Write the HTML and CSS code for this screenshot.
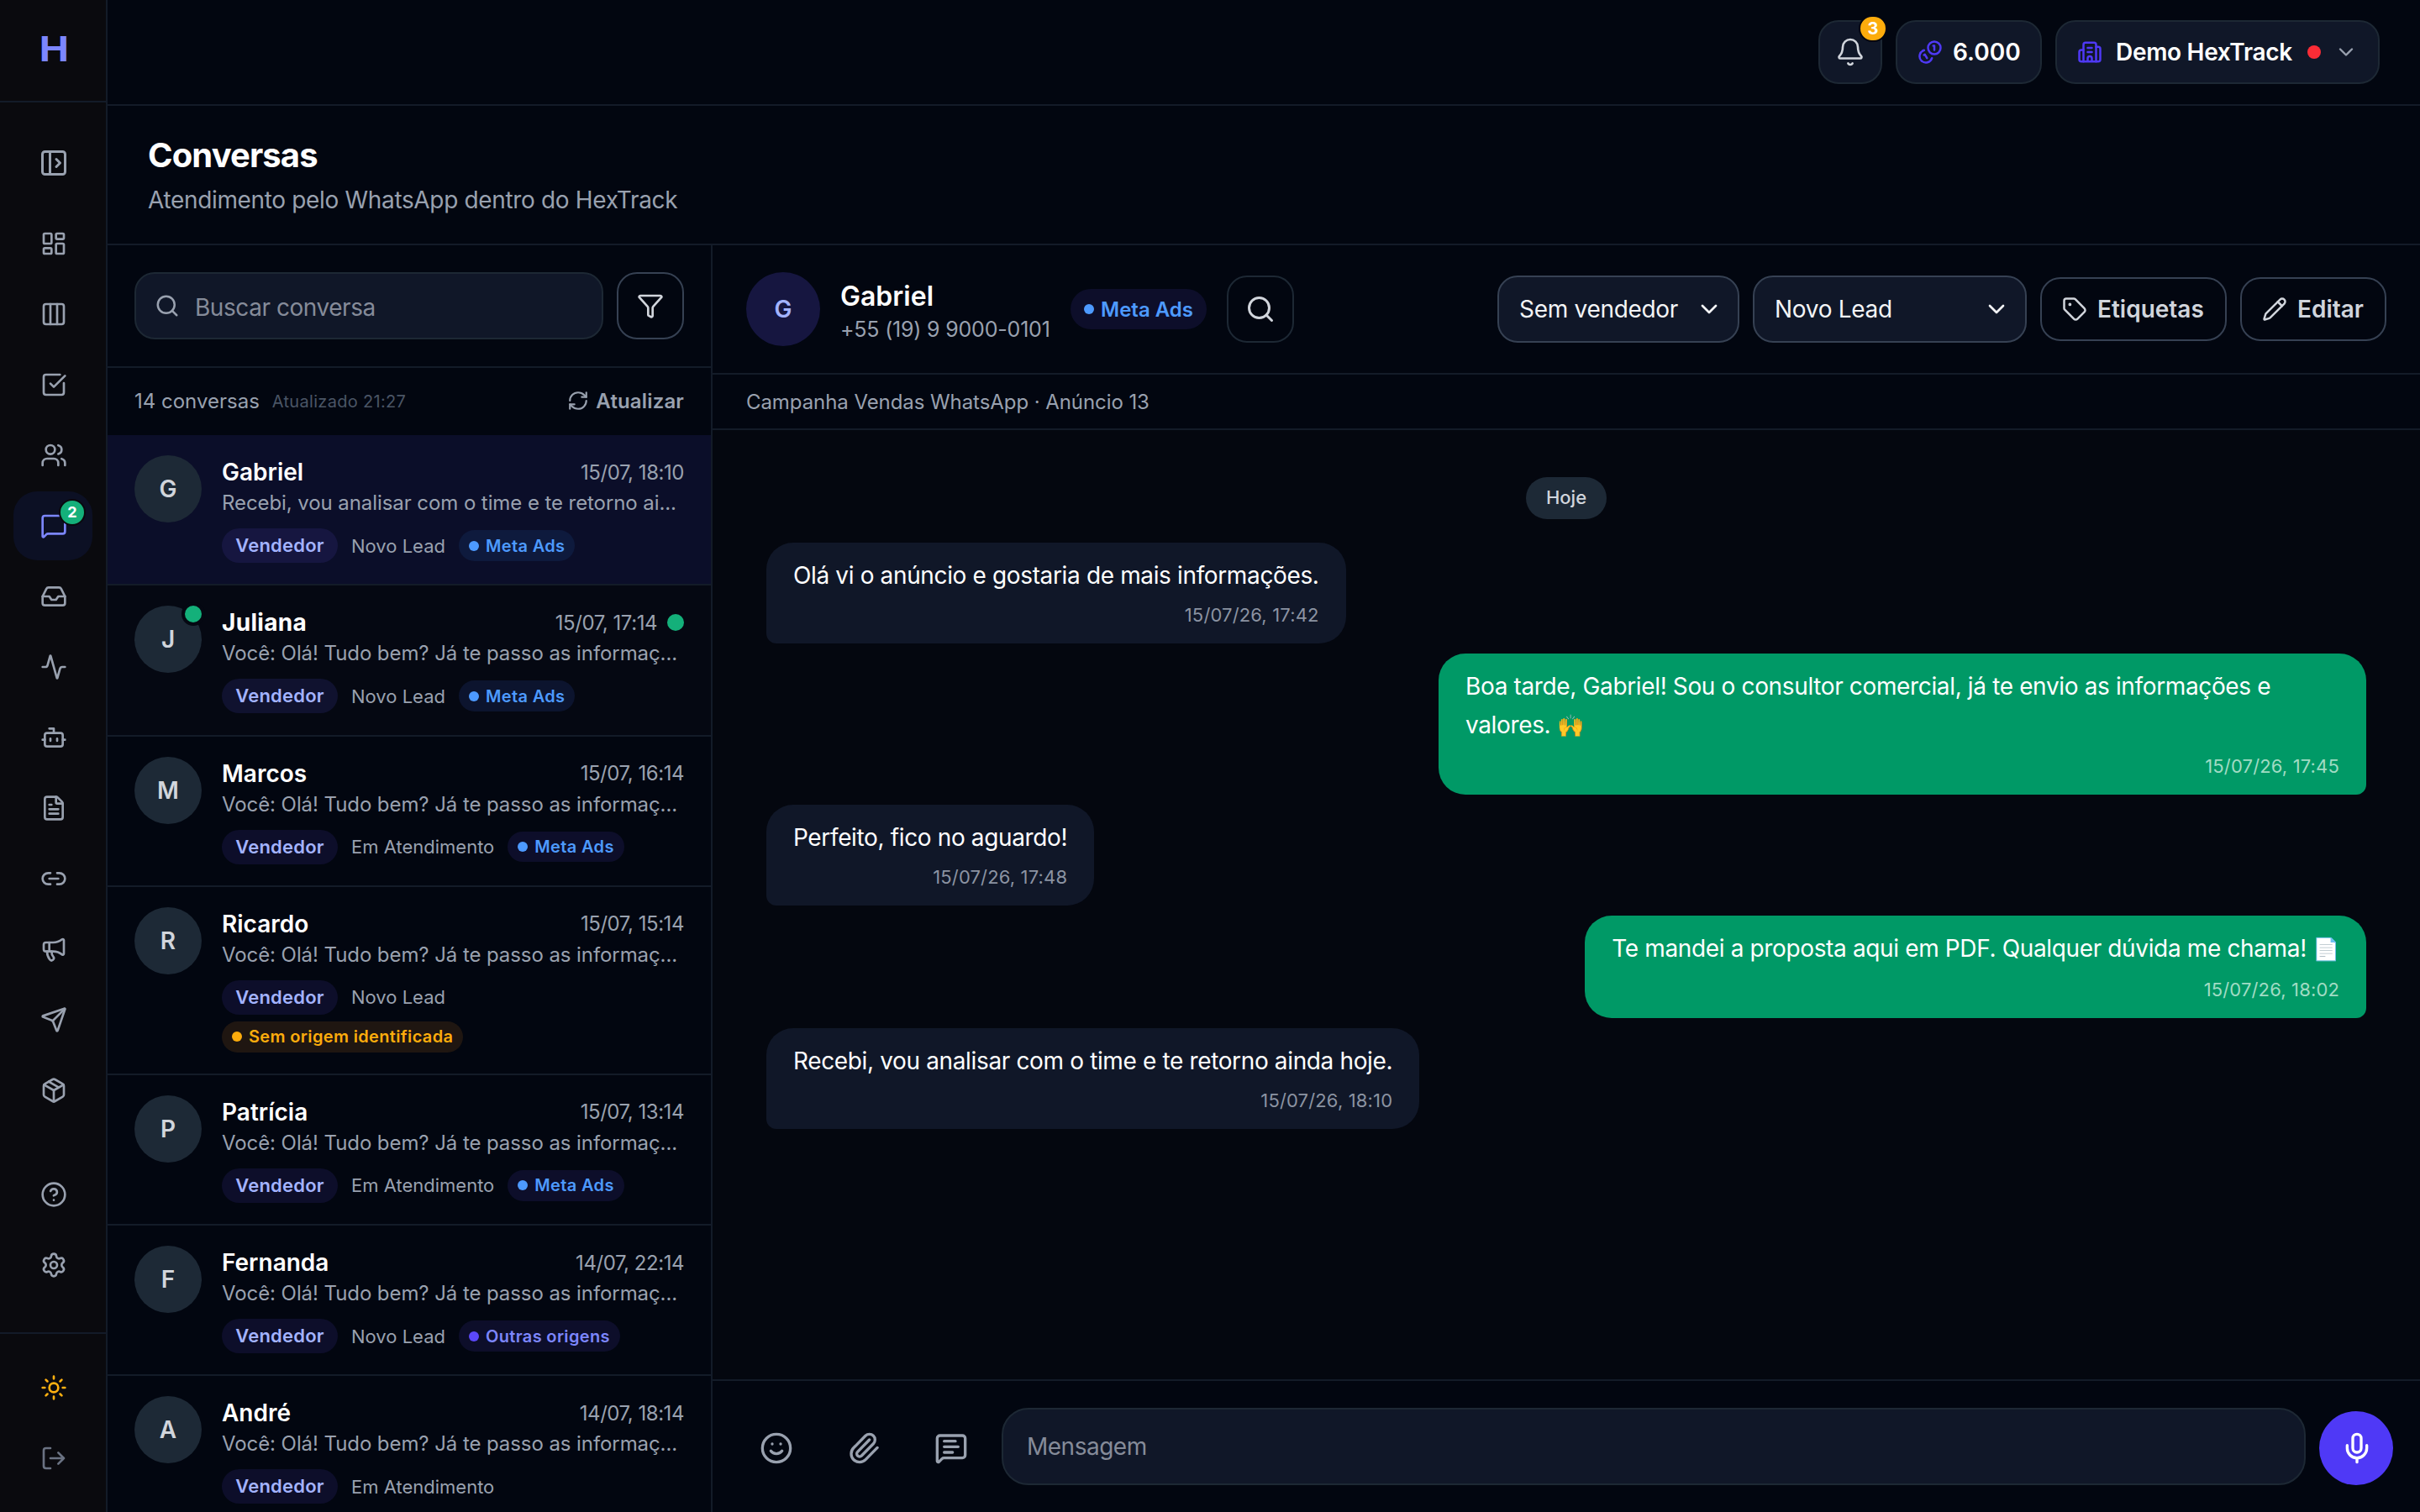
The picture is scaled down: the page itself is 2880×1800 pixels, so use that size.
FILE: index.html
```html
<!DOCTYPE html>
<html lang="pt-BR">
<head>
  <meta charset="UTF-8" />
  <meta name="viewport" content="width=device-width, initial-scale=1.0" />
  <title>HexTrack | Conversas</title>
  <link rel="stylesheet" href="styles.css">
</head>
<body>
  <svg class="sprite" xmlns="http://www.w3.org/2000/svg">
    <symbol id="i-panel" viewBox="0 0 24 24"><rect x="3" y="3" width="18" height="18" rx="2"/><path d="M9 3v18M14 9l3 3-3 3"/></symbol>
    <symbol id="i-dashboard" viewBox="0 0 24 24"><rect x="3" y="3" width="7" height="9" rx="1"/><rect x="14" y="3" width="7" height="5" rx="1"/><rect x="14" y="12" width="7" height="9" rx="1"/><rect x="3" y="16" width="7" height="5" rx="1"/></symbol>
    <symbol id="i-columns" viewBox="0 0 24 24"><rect x="3" y="3" width="18" height="18" rx="2"/><path d="M9 3v18M15 3v18"/></symbol>
    <symbol id="i-check" viewBox="0 0 24 24"><path d="M21 10.5V19a2 2 0 0 1-2 2H5a2 2 0 0 1-2-2V5a2 2 0 0 1 2-2h12.5"/><path d="m9 11 3 3L22 4"/></symbol>
    <symbol id="i-users" viewBox="0 0 24 24"><path d="M16 21v-2a4 4 0 0 0-4-4H6a4 4 0 0 0-4 4v2"/><circle cx="9" cy="7" r="4"/><path d="M22 21v-2a4 4 0 0 0-3-3.87M16 3.13a4 4 0 0 1 0 7.75"/></symbol>
    <symbol id="i-chat" viewBox="0 0 24 24"><path d="M22 17a2 2 0 0 1-2 2H6.828a2 2 0 0 0-1.414.586l-2.202 2.202A.71.71 0 0 1 2 21.286V5a2 2 0 0 1 2-2h16a2 2 0 0 1 2 2z"/></symbol>
    <symbol id="i-inbox" viewBox="0 0 24 24"><path d="M22 12h-6l-2 3h-4l-2-3H2"/><path d="M5.45 5.11 2 12v6a2 2 0 0 0 2 2h16a2 2 0 0 0 2-2v-6l-3.45-6.89A2 2 0 0 0 16.76 4H7.24a2 2 0 0 0-1.79 1.11z"/></symbol>
    <symbol id="i-activity" viewBox="0 0 24 24"><path d="M22 12h-2.48a2 2 0 0 0-1.93 1.46l-2.35 8.36a.25.25 0 0 1-.48 0L9.24 2.18a.25.25 0 0 0-.48 0l-2.35 8.36A2 2 0 0 1 4.49 12H2"/></symbol>
    <symbol id="i-bot" viewBox="0 0 24 24"><path d="M12 8V4H8"/><rect x="4" y="8" width="16" height="12" rx="2"/><path d="M2 14h2M20 14h2M15 13v2M9 13v2"/></symbol>
    <symbol id="i-file" viewBox="0 0 24 24"><path d="M6 22a2 2 0 0 1-2-2V4a2 2 0 0 1 2-2h8a2.4 2.4 0 0 1 1.704.706l3.588 3.588A2.4 2.4 0 0 1 20 8v12a2 2 0 0 1-2 2z"/><path d="M14 2v5a1 1 0 0 0 1 1h5M10 9H8M16 13H8M16 17H8"/></symbol>
    <symbol id="i-link" viewBox="0 0 24 24"><path d="M9 17H7A5 5 0 0 1 7 7h2M15 7h2a5 5 0 1 1 0 10h-2M8 12h8"/></symbol>
    <symbol id="i-megaphone" viewBox="0 0 24 24"><path d="M11 6a13 13 0 0 0 8.4-2.8A1 1 0 0 1 21 4v12a1 1 0 0 1-1.6.8A13 13 0 0 0 11 14H5a2 2 0 0 1-2-2V8a2 2 0 0 1 2-2z"/><path d="M6 14a12 12 0 0 0 2.4 7.2 2 2 0 0 0 3.2-2.4A8 8 0 0 1 10 14M8 6v8"/></symbol>
    <symbol id="i-send" viewBox="0 0 24 24"><path d="M14.536 21.686a.5.5 0 0 0 .937-.024l6.5-19a.496.496 0 0 0-.635-.635l-19 6.5a.5.5 0 0 0-.024.937l7.93 3.18a2 2 0 0 1 1.112 1.11z"/><path d="m21.854 2.147-10.94 10.939"/></symbol>
    <symbol id="i-package" viewBox="0 0 24 24"><path d="M11 21.73a2 2 0 0 0 2 0l7-4A2 2 0 0 0 21 16V8a2 2 0 0 0-1-1.73l-7-4a2 2 0 0 0-2 0l-7 4A2 2 0 0 0 3 8v8a2 2 0 0 0 1 1.73z"/><path d="M12 22V12"/><path d="M3.29 7 12 12l8.71-5M7.5 4.27l9 5.15"/></symbol>
    <symbol id="i-help" viewBox="0 0 24 24"><circle cx="12" cy="12" r="10"/><path d="M9.09 9a3 3 0 0 1 5.83 1c0 2-3 3-3 3M12 17h.01"/></symbol>
    <symbol id="i-settings" viewBox="0 0 24 24"><path d="M9.671 4.136a2.34 2.34 0 0 1 4.659 0 2.34 2.34 0 0 0 3.319 1.915 2.34 2.34 0 0 1 2.33 4.033 2.34 2.34 0 0 0 0 3.831 2.34 2.34 0 0 1-2.33 4.033 2.34 2.34 0 0 0-3.319 1.915 2.34 2.34 0 0 1-4.659 0 2.34 2.34 0 0 0-3.32-1.915 2.34 2.34 0 0 1-2.33-4.033 2.34 2.34 0 0 0 0-3.831A2.34 2.34 0 0 1 6.35 6.051a2.34 2.34 0 0 0 3.319-1.915"/><circle cx="12" cy="12" r="3"/></symbol>
    <symbol id="i-sun" viewBox="0 0 24 24"><circle cx="12" cy="12" r="4"/><path d="M12 2v2M12 20v2M4.930 4.930l1.410 1.410M17.660 17.660l1.410 1.410M2 12h2M20 12h2M6.340 17.660l-1.410 1.410M19.070 4.930l-1.410 1.410"/></symbol>
    <symbol id="i-logout" viewBox="0 0 24 24"><path d="M16 17l5-5-5-5M21 12H9M9 21H5a2 2 0 0 1-2-2V5a2 2 0 0 1 2-2h4"/></symbol>
    <symbol id="i-bell" viewBox="0 0 24 24"><path d="M10.268 21a2 2 0 0 0 3.464 0"/><path d="M3.262 15.326A1 1 0 0 0 4 17h16a1 1 0 0 0 .74-1.673C19.41 13.956 18 12.499 18 8A6 6 0 0 0 6 8c0 4.499-1.411 5.956-2.738 7.326"/></symbol>
    <symbol id="i-coins" viewBox="0 0 24 24"><path d="M13.744 17.736a6 6 0 1 1-7.48-7.48M15 6h1v4M6.134 14.768l.866-.5 2 3.464"/><circle cx="16" cy="8" r="6"/></symbol>
    <symbol id="i-building" viewBox="0 0 24 24"><path d="M10 12h4M10 8h4M14 21v-3a2 2 0 0 0-4 0v3M6 10H4a2 2 0 0 0-2 2v7a2 2 0 0 0 2 2h16a2 2 0 0 0 2-2V9a2 2 0 0 0-2-2h-2"/><path d="M6 21V5a2 2 0 0 1 2-2h8a2 2 0 0 1 2 2v16"/></symbol>
    <symbol id="i-chevron" viewBox="0 0 24 24"><path d="m6 9 6 6 6-6"/></symbol>
    <symbol id="i-search" viewBox="0 0 24 24"><circle cx="11" cy="11" r="8"/><path d="m21 21-4.34-4.34"/></symbol>
    <symbol id="i-funnel" viewBox="0 0 24 24"><path d="M10 20a1 1 0 0 0 .553.895l2 1A1 1 0 0 0 14 21v-7a2 2 0 0 1 .517-1.341L21.74 4.67A1 1 0 0 0 21 3H3a1 1 0 0 0-.742 1.67l7.225 7.989A2 2 0 0 1 10 14z"/></symbol>
    <symbol id="i-refresh" viewBox="0 0 24 24"><path d="M3 12a9 9 0 0 1 9-9 9.75 9.75 0 0 1 6.74 2.74L21 8"/><path d="M21 3v5h-5M21 12a9 9 0 0 1-9 9 9.75 9.75 0 0 1-6.740-2.740L3 16"/><path d="M8 16H3v5"/></symbol>
    <symbol id="i-tag" viewBox="0 0 24 24"><path d="M12.586 2.586A2 2 0 0 0 11.172 2H4a2 2 0 0 0-2 2v7.172a2 2 0 0 0 .586 1.414l8.704 8.704a2.426 2.426 0 0 0 3.42 0l6.58-6.58a2.426 2.426 0 0 0 0-3.42z"/><circle cx="7.5" cy="7.5" r=".5" fill="currentColor"/></symbol>
    <symbol id="i-pencil" viewBox="0 0 24 24"><path d="M21.174 6.812a1 1 0 0 0-3.986-3.987L3.842 16.174a2 2 0 0 0-.5.83l-1.321 4.352a.5.5 0 0 0 .623.622l4.353-1.32a2 2 0 0 0 .83-.497z"/><path d="m15 5 4 4"/></symbol>
    <symbol id="i-smile" viewBox="0 0 24 24"><circle cx="12" cy="12" r="10"/><path d="M8 14s1.500 2 4 2 4-2 4-2M9 9h.01M15 9h.01"/></symbol>
    <symbol id="i-clip" viewBox="0 0 24 24"><path d="m16 6-8.414 8.586a2 2 0 0 0 2.829 2.829l8.414-8.586a4 4 0 1 0-5.657-5.657l-8.379 8.551a6 6 0 1 0 8.485 8.485l8.379-8.551"/></symbol>
    <symbol id="i-note" viewBox="0 0 24 24"><path d="M22 17a2 2 0 0 1-2 2H6.828a2 2 0 0 0-1.414.586l-2.202 2.202A.71.71 0 0 1 2 21.286V5a2 2 0 0 1 2-2h16a2 2 0 0 1 2 2z"/><path d="M7 11h10M7 15h6M7 7h8"/></symbol>
    <symbol id="i-mic" viewBox="0 0 24 24"><path d="M12 19v3M19 10v2a7 7 0 0 1-14 0v-2"/><rect x="9" y="2" width="6" height="13" rx="3"/></symbol>
  </svg>

  <aside class="sidebar">
    <div class="logo"><span>H</span></div>
    <nav class="side-nav">
      <a class="side-toggle"><svg class="icon"><use href="#i-panel"/></svg></a>
      <a class="side-link"><svg class="icon"><use href="#i-dashboard"/></svg></a>
      <a class="side-link"><svg class="icon"><use href="#i-columns"/></svg></a>
      <a class="side-link"><svg class="icon"><use href="#i-check"/></svg></a>
      <a class="side-link"><svg class="icon"><use href="#i-users"/></svg></a>
      <a class="side-link active"><svg class="icon"><use href="#i-chat"/></svg><span class="side-badge">2</span></a>
      <a class="side-link"><svg class="icon"><use href="#i-inbox"/></svg></a>
      <a class="side-link"><svg class="icon"><use href="#i-activity"/></svg></a>
      <a class="side-link"><svg class="icon"><use href="#i-bot"/></svg></a>
      <a class="side-link"><svg class="icon"><use href="#i-file"/></svg></a>
      <a class="side-link"><svg class="icon"><use href="#i-link"/></svg></a>
      <a class="side-link"><svg class="icon"><use href="#i-megaphone"/></svg></a>
      <a class="side-link"><svg class="icon"><use href="#i-send"/></svg></a>
      <a class="side-link"><svg class="icon"><use href="#i-package"/></svg></a>
      <a class="side-link side-help"><svg class="icon"><use href="#i-help"/></svg></a>
      <a class="side-link"><svg class="icon"><use href="#i-settings"/></svg></a>
    </nav>
    <div class="side-footer">
      <a class="side-link sun"><svg class="icon"><use href="#i-sun"/></svg></a>
      <a class="side-link logout"><svg class="icon"><use href="#i-logout"/></svg></a>
    </div>
  </aside>

  <div class="page">
    <header class="topbar">
      <button class="top-btn bell"><svg class="icon"><use href="#i-bell"/></svg><span class="bell-badge">3</span></button>
      <button class="top-btn credits"><svg class="icon"><use href="#i-coins"/></svg><span>6.000</span></button>
      <button class="top-btn company"><svg class="icon"><use href="#i-building"/></svg><span class="company-name">Demo HexTrack</span><span class="status-dot"></span><svg class="icon chevron"><use href="#i-chevron"/></svg></button>
    </header>

    <div class="page-title">
      <h1>Conversas</h1>
      <p>Atendimento pelo WhatsApp dentro do HexTrack</p>
    </div>

    <main class="inbox">
      <section class="list-panel">
        <div class="list-search">
          <div class="search-box"><svg class="icon"><use href="#i-search"/></svg><span>Buscar conversa</span></div>
          <button class="filter-btn"><svg class="icon"><use href="#i-funnel"/></svg></button>
        </div>
        <div class="list-info">
          <span class="count">14 conversas</span>
          <span class="updated">Atualizado 21:27</span>
          <button class="refresh"><svg class="icon"><use href="#i-refresh"/></svg><span>Atualizar</span></button>
        </div>

        <div class="conversations">
          <article class="conv selected">
            <div class="avatar">G</div>
            <div class="conv-body">
              <div class="conv-top"><span class="name">Gabriel</span><span class="time">15/07, 18:10</span></div>
              <p class="preview">Recebi, vou analisar com o time e te retorno ai...</p>
              <div class="tags"><span class="seller">Vendedor</span><span class="stage">Novo Lead</span><span class="origin meta">Meta Ads</span></div>
            </div>
          </article>
          <article class="conv unread">
            <div class="avatar">J<span class="avatar-dot"></span></div>
            <div class="conv-body">
              <div class="conv-top"><span class="name">Juliana</span><span class="time">15/07, 17:14</span><span class="unread-dot"></span></div>
              <p class="preview">Você: Olá! Tudo bem? Já te passo as informaç...</p>
              <div class="tags"><span class="seller">Vendedor</span><span class="stage">Novo Lead</span><span class="origin meta">Meta Ads</span></div>
            </div>
          </article>
          <article class="conv">
            <div class="avatar">M</div>
            <div class="conv-body">
              <div class="conv-top"><span class="name">Marcos</span><span class="time">15/07, 16:14</span></div>
              <p class="preview">Você: Olá! Tudo bem? Já te passo as informaç...</p>
              <div class="tags"><span class="seller">Vendedor</span><span class="stage">Em Atendimento</span><span class="origin meta">Meta Ads</span></div>
            </div>
          </article>
          <article class="conv">
            <div class="avatar">R</div>
            <div class="conv-body">
              <div class="conv-top"><span class="name">Ricardo</span><span class="time">15/07, 15:14</span></div>
              <p class="preview">Você: Olá! Tudo bem? Já te passo as informaç...</p>
              <div class="tags"><span class="seller">Vendedor</span><span class="stage">Novo Lead</span><span class="origin unknown">Sem origem identificada</span></div>
            </div>
          </article>
          <article class="conv">
            <div class="avatar">P</div>
            <div class="conv-body">
              <div class="conv-top"><span class="name">Patrícia</span><span class="time">15/07, 13:14</span></div>
              <p class="preview">Você: Olá! Tudo bem? Já te passo as informaç...</p>
              <div class="tags"><span class="seller">Vendedor</span><span class="stage">Em Atendimento</span><span class="origin meta">Meta Ads</span></div>
            </div>
          </article>
          <article class="conv">
            <div class="avatar">F</div>
            <div class="conv-body">
              <div class="conv-top"><span class="name">Fernanda</span><span class="time">14/07, 22:14</span></div>
              <p class="preview">Você: Olá! Tudo bem? Já te passo as informaç...</p>
              <div class="tags"><span class="seller">Vendedor</span><span class="stage">Novo Lead</span><span class="origin other">Outras origens</span></div>
            </div>
          </article>
          <article class="conv">
            <div class="avatar">A</div>
            <div class="conv-body">
              <div class="conv-top"><span class="name">André</span><span class="time">14/07, 18:14</span></div>
              <p class="preview">Você: Olá! Tudo bem? Já te passo as informaç...</p>
              <div class="tags"><span class="seller">Vendedor</span><span class="stage">Em Atendimento</span></div>
            </div>
          </article>
        </div>
      </section>

      <section class="chat">
        <div class="chat-header">
          <div class="chat-avatar">G</div>
          <div class="contact">
            <span class="contact-name">Gabriel</span>
            <span class="contact-phone">+55 (19) 9 9000-0101</span>
          </div>
          <span class="origin meta origin-lg">Meta Ads</span>
          <button class="chat-search"><svg class="icon"><use href="#i-search"/></svg></button>
          <div class="chat-actions">
            <div class="select select-seller"><span>Sem vendedor</span><svg class="icon"><use href="#i-chevron"/></svg></div>
            <div class="select select-stage"><span>Novo Lead</span><svg class="icon"><use href="#i-chevron"/></svg></div>
            <button class="action-btn tags-btn"><svg class="icon"><use href="#i-tag"/></svg><span>Etiquetas</span></button>
            <button class="action-btn edit-btn"><svg class="icon"><use href="#i-pencil"/></svg><span>Editar</span></button>
          </div>
        </div>
        <div class="campaign"><span>Campanha Vendas WhatsApp · Anúncio 13</span></div>

        <div class="messages">
          <span class="day">Hoje</span>
          <div class="msg in"><p>Olá vi o anúncio e gostaria de mais informações.</p><time>15/07/26, 17:42</time></div>
          <div class="msg out"><p>Boa tarde, Gabriel! Sou o consultor comercial, já te envio as informações e valores. <span class="emoji">🙌</span></p><time>15/07/26, 17:45</time></div>
          <div class="msg in"><p>Perfeito, fico no aguardo!</p><time>15/07/26, 17:48</time></div>
          <div class="msg out"><p>Te mandei a proposta aqui em PDF. Qualquer dúvida me chama! <span class="emoji">📄</span></p><time>15/07/26, 18:02</time></div>
          <div class="msg in"><p>Recebi, vou analisar com o time e te retorno ainda hoje.</p><time>15/07/26, 18:10</time></div>
        </div>

        <div class="composer">
          <button class="tool"><svg class="icon"><use href="#i-smile"/></svg></button>
          <button class="tool"><svg class="icon"><use href="#i-clip"/></svg></button>
          <button class="tool"><svg class="icon"><use href="#i-note"/></svg></button>
          <div class="message-input"><span>Mensagem</span></div>
          <button class="mic"><svg class="icon"><use href="#i-mic"/></svg></button>
        </div>
      </section>
    </main>
  </div>
</body>
</html>
```
FILE: styles.css
```css
:root {
  --bg: #020610;
  --side-bg: #0a0a0e;
  --chat-bg: #04070f;
  --line: #131b28;
  --field: #101728;
  --field-line: #1d2834;
  --strong-line: #364153;
  --muted: #99a1af;
  --text: #fff;
  --soft: #d1d5dc;
  --avatar: #1d2936;
  --chip: #0d0e2a;
  --indigo: #4f39f6;
  --green: #009966;
  --unread: #14b07a;
}

* {
  box-sizing: border-box;
}

body {
  margin: 0;
  width: 2880px;
  height: 1800px;
  overflow: hidden;
  display: flex;
  background: var(--bg);
  color: var(--text);
  font-family: Inter, "Liberation Sans", sans-serif;
  font-size: 28px;
}

button {
  font: inherit;
  color: inherit;
  background: none;
  border: 0;
  padding: 0;
  display: flex;
  align-items: center;
}

h1, p {
  margin: 0;
}

.sprite {
  position: absolute;
  width: 0;
  height: 0;
}

.icon {
  width: 32px;
  height: 32px;
  flex: none;
  fill: none;
  stroke: currentColor;
  stroke-width: 2;
  stroke-linecap: round;
  stroke-linejoin: round;
}

/* Sidebar */
.sidebar {
  width: 128px;
  height: 1800px;
  flex: none;
  background: var(--side-bg);
  border-right: 2px solid var(--line);
  display: flex;
  flex-direction: column;
}

.logo {
  height: 122px;
  flex: none;
  padding: 0 0 4px 2px;
  border-bottom: 2px solid var(--line);
  display: flex;
  justify-content: center;
  align-items: center;
  font-size: 41px;
  font-weight: 700;
  color: #7c86ff;
}

.logo span {
  transform: scaleX(1.15);
}

.side-nav {
  flex: 1;
  padding: 31px 16px 0;
  display: flex;
  flex-direction: column;
  gap: 2px;
  color: var(--muted);
}

.side-toggle,
.side-link {
  height: 82px;
  flex: none;
  padding-left: 2px;
  display: flex;
  justify-content: center;
  align-items: center;
  border-radius: 28px;
}

.side-toggle {
  margin-bottom: 12px;
}

.side-toggle .icon {
  width: 36px;
  height: 36px;
}

.side-link.active {
  position: relative;
  background: #0c1024;
  color: #7c86ff;
}

.side-badge {
  position: absolute;
  top: 9px;
  right: 8px;
  width: 32px;
  height: 32px;
  border: 2px solid var(--side-bg);
  border-radius: 50%;
  background: var(--unread);
  color: #fff;
  font-size: 18px;
  font-weight: 700;
  line-height: 28px;
  text-align: center;
}

.side-help {
  margin-top: 40px;
}

.side-footer {
  height: 214px;
  border-top: 2px solid var(--line);
  padding: 23px 16px 0;
  display: flex;
  flex-direction: column;
  gap: 2px;
}

.sun {
  color: #ffb010;
}

.logout {
  color: #6a7282;
}

/* Topbar */
.page {
  flex: 1;
  min-width: 0;
  height: 1800px;
  display: flex;
  flex-direction: column;
}

.topbar {
  height: 126px;
  flex: none;
  padding: 0 48px;
  border-bottom: 2px solid var(--line);
  display: flex;
  justify-content: flex-end;
  align-items: center;
  gap: 16px;
}

.top-btn {
  height: 76px;
  padding: 0 24px;
  background: var(--field);
  border: 2px solid var(--field-line);
  border-radius: 24px;
  font-weight: 600;
}

.top-btn .icon {
  width: 30px;
  height: 30px;
  color: var(--indigo);
}

.bell {
  position: relative;
  width: 76px;
  padding: 0;
  justify-content: center;
}

.bell .icon {
  width: 36px;
  height: 36px;
  color: var(--soft);
  stroke-width: 1.75;
}

.bell-badge {
  position: absolute;
  top: -8px;
  right: -8px;
  width: 34px;
  height: 32px;
  border: 2px solid var(--bg);
  border-radius: 16px;
  background: #fdac0c;
  font-size: 20px;
  font-weight: 700;
  line-height: 28px;
  text-align: center;
}

.credits {
  width: 174px;
  gap: 12px;
}

.company {
  width: 386px;
  gap: 16px;
}

.company-name {
  width: 212px;
  letter-spacing: -0.3px;
  text-align: left;
  white-space: nowrap;
}

.company .chevron {
  width: 28px;
  height: 28px;
  color: var(--muted);
}

.status-dot {
  width: 16px;
  height: 16px;
  flex: none;
  border-radius: 50%;
  background: #fb2c36;
}

.page-title {
  height: 166px;
  flex: none;
  padding: 34px 48px 0;
  border-bottom: 2px solid var(--line);
}

.page-title h1 {
  font-size: 40px;
  line-height: 50px;
  font-weight: 700;
  letter-spacing: -0.9px;
}

.page-title p {
  margin-top: 8px;
  font-size: 28px;
  line-height: 40px;
  letter-spacing: -0.34px;
  color: var(--muted);
}

.inbox {
  flex: 1;
  min-height: 0;
  display: flex;
}

/* Conversation list */
.list-panel {
  width: 720px;
  flex: none;
  border-right: 2px solid var(--line);
  display: flex;
  flex-direction: column;
  overflow: hidden;
}

.list-search {
  height: 146px;
  flex: none;
  padding: 32px;
  border-bottom: 2px solid var(--line);
  display: flex;
  gap: 16px;
}

.search-box {
  flex: 1;
  height: 80px;
  padding: 0 22px;
  display: flex;
  align-items: center;
  gap: 18px;
  background: var(--field);
  border: 2px solid var(--field-line);
  border-radius: 24px;
  color: #858b99;
  letter-spacing: -0.45px;
}

.search-box .icon {
  width: 30px;
  height: 30px;
  color: var(--muted);
}

.search-box span {
  padding-top: 3px;
}

.filter-btn {
  width: 80px;
  height: 80px;
  justify-content: center;
  border: 2px solid var(--strong-line);
  border-radius: 24px;
  color: var(--soft);
}

.list-info {
  height: 80px;
  flex: none;
  padding: 0 32px 2px;
  display: flex;
  align-items: center;
  font-size: 24px;
  color: var(--muted);
}

.updated {
  margin-left: 15px;
  padding-top: 2px;
  font-size: 20px;
  letter-spacing: 0.3px;
  color: #4a5565;
}

.refresh {
  margin-left: auto;
  gap: 8px;
  font-weight: 600;
  letter-spacing: 0.15px;
}

.refresh .icon {
  width: 26px;
  height: 26px;
}

.conv {
  padding: 24px 32px 25.25px;
  border-bottom: 2px solid var(--line);
  display: flex;
  gap: 24px;
}

.conv.selected {
  background: #0b0e29;
}

.conv.unread {
  background: #050812;
}

.avatar {
  position: relative;
  width: 80px;
  height: 80px;
  flex: none;
  border-radius: 50%;
  background: var(--avatar);
  color: var(--soft);
  font-weight: 600;
  line-height: 80px;
  text-align: center;
}

.avatar-dot {
  position: absolute;
  top: -4px;
  right: -4px;
  width: 28px;
  height: 28px;
  border: 4px solid #050812;
  border-radius: 50%;
  background: var(--unread);
}

.conv-body {
  flex: 1;
  min-width: 0;
}

.conv-top {
  height: 40px;
  display: flex;
  align-items: center;
}

.name {
  font-weight: 600;
}

.unread .name {
  font-weight: 700;
  letter-spacing: 0.3px;
}

.time {
  margin-left: auto;
  font-size: 24px;
  letter-spacing: -0.45px;
  color: var(--muted);
}

.unread-dot {
  width: 20px;
  height: 20px;
  margin-left: 12px;
  border-radius: 50%;
  background: var(--unread);
}

.preview {
  font-size: 24px;
  line-height: 33px;
  letter-spacing: -0.08px;
  white-space: nowrap;
  color: var(--muted);
}

.tags {
  margin-top: 14px;
  display: flex;
  flex-wrap: wrap;
  align-items: center;
  gap: 8px 16px;
}

.seller {
  width: 138px;
  height: 41px;
  border-radius: 21px;
  background: var(--chip);
  color: #a3b3ff;
  font-size: 22px;
  font-weight: 600;
  letter-spacing: 0.2px;
  line-height: 41px;
  text-align: center;
}

.stage {
  font-size: 22px;
  color: var(--muted);
}

.origin {
  height: 36.75px;
  padding: 0 12px;
  display: flex;
  align-items: center;
  gap: 8px;
  border-radius: 24px;
  background: var(--chip);
  font-size: 20px;
  font-weight: 600;
  letter-spacing: 0.35px;
}

.origin::before {
  content: "";
  width: 12px;
  height: 12px;
  border-radius: 50%;
  background: currentColor;
}

.origin.meta {
  color: #4d9aff;
}

.origin.unknown {
  background: #1f1611;
  color: #fdac0c;
}

.origin.other {
  color: #7c86ff;
}

.origin.other::before {
  background: #5b48f8;
}

.selected .seller {
  background: #161640;
}

.selected .meta {
  background: #0e1a3d;
}

.unread .seller {
  background: #10122f;
}

.unread .meta {
  background: #0c142e;
}

/* Chat */
.chat {
  flex: 1;
  min-width: 0;
  display: flex;
  flex-direction: column;
}

.chat-header {
  height: 154px;
  flex: none;
  padding: 0 40px;
  border-bottom: 2px solid var(--line);
  display: flex;
  align-items: center;
}

.chat-avatar {
  width: 88px;
  height: 88px;
  border-radius: 50%;
  background: #161640;
  color: #a3b3ff;
  font-weight: 600;
  line-height: 88px;
  text-align: center;
}

.contact {
  margin-left: 24px;
  padding-top: 6px;
  width: 250px;
  display: flex;
  flex-direction: column;
  white-space: nowrap;
}

.contact-name {
  font-size: 32px;
  line-height: 42px;
  font-weight: 600;
}

.contact-phone {
  font-size: 25px;
  line-height: 36px;
  letter-spacing: -0.2px;
  color: var(--muted);
}

.origin-lg {
  width: 162px;
  height: 48px;
  margin-left: 24px;
  padding: 0 16px;
  font-size: 24px;
  letter-spacing: 0;
}

.chat-search {
  width: 80px;
  height: 80px;
  margin-left: 24px;
  justify-content: center;
  border: 2px solid var(--field-line);
  border-radius: 24px;
  color: var(--soft);
}

.chat-search .icon {
  width: 36px;
  height: 36px;
}

.chat-actions {
  margin-left: auto;
  display: flex;
  align-items: center;
  gap: 16px;
}

.select {
  height: 80px;
  padding: 0 18px 0 24px;
  display: flex;
  justify-content: space-between;
  align-items: center;
  background: var(--field);
  border: 2px solid var(--strong-line);
  border-radius: 24px;
  color: #f3f4f6;
  letter-spacing: -0.3px;
}

.select-seller {
  width: 288px;
}

.select-stage {
  width: 326px;
}

.action-btn {
  height: 76px;
  padding: 0 24px;
  gap: 12px;
  border: 2px solid var(--strong-line);
  border-radius: 24px;
  font-weight: 600;
  color: var(--soft);
}

.tags-btn {
  width: 222px;
}

.edit-btn {
  width: 174px;
}

.action-btn .icon {
  width: 30px;
  height: 30px;
}

.campaign {
  height: 66px;
  flex: none;
  padding: 0 40px;
  border-bottom: 2px solid var(--line);
  display: flex;
  align-items: center;
  font-size: 24px;
  letter-spacing: -0.07px;
  color: var(--muted);
}

.messages {
  flex: 1;
  padding: 56px 64px 0;
  background: var(--chat-bg);
  display: flex;
  flex-direction: column;
  align-items: flex-start;
  gap: 12px;
}

.day {
  align-self: center;
  width: 96px;
  height: 50px;
  margin-bottom: 16px;
  border-radius: 25px;
  background: var(--avatar);
  color: var(--soft);
  font-size: 22px;
  font-weight: 500;
  line-height: 49px;
  text-align: center;
}

.msg {
  max-width: 1104px;
  padding: 16px 32px;
  border-radius: 32px;
}

.msg p {
  line-height: 46px;
  letter-spacing: -0.36px;
}

.emoji {
  font-size: 26px;
  line-height: 1;
}

.msg time {
  display: block;
  margin-top: 6px;
  font-size: 22px;
  line-height: 36px;
  letter-spacing: 0.15px;
  text-align: right;
  color: #8b93a2;
}

.msg.in {
  background: var(--field);
  border-bottom-left-radius: 12px;
}

.msg.out {
  align-self: flex-end;
  background: var(--green);
  border-bottom-right-radius: 12px;
}

.msg.out time {
  margin-top: 8px;
  color: #a0dcc4;
}

.composer {
  height: 158px;
  flex: none;
  padding: 0 32px 32px;
  border-top: 2px solid var(--line);
  display: flex;
  align-items: flex-end;
  gap: 16px;
}

.tool {
  width: 88px;
  height: 88px;
  justify-content: center;
  color: var(--muted);
}

.tool .icon,
.mic .icon {
  width: 40px;
  height: 40px;
}

.message-input {
  flex: 1;
  height: 92px;
  padding: 0 28px;
  display: flex;
  align-items: center;
  background: var(--field);
  border: 2px solid var(--field-line);
  border-radius: 32px;
  color: #858b99;
  letter-spacing: -0.5px;
}

.mic {
  width: 88px;
  height: 88px;
  padding-left: 2px;
  justify-content: center;
  border-radius: 50%;
  background: var(--indigo);
}
```
